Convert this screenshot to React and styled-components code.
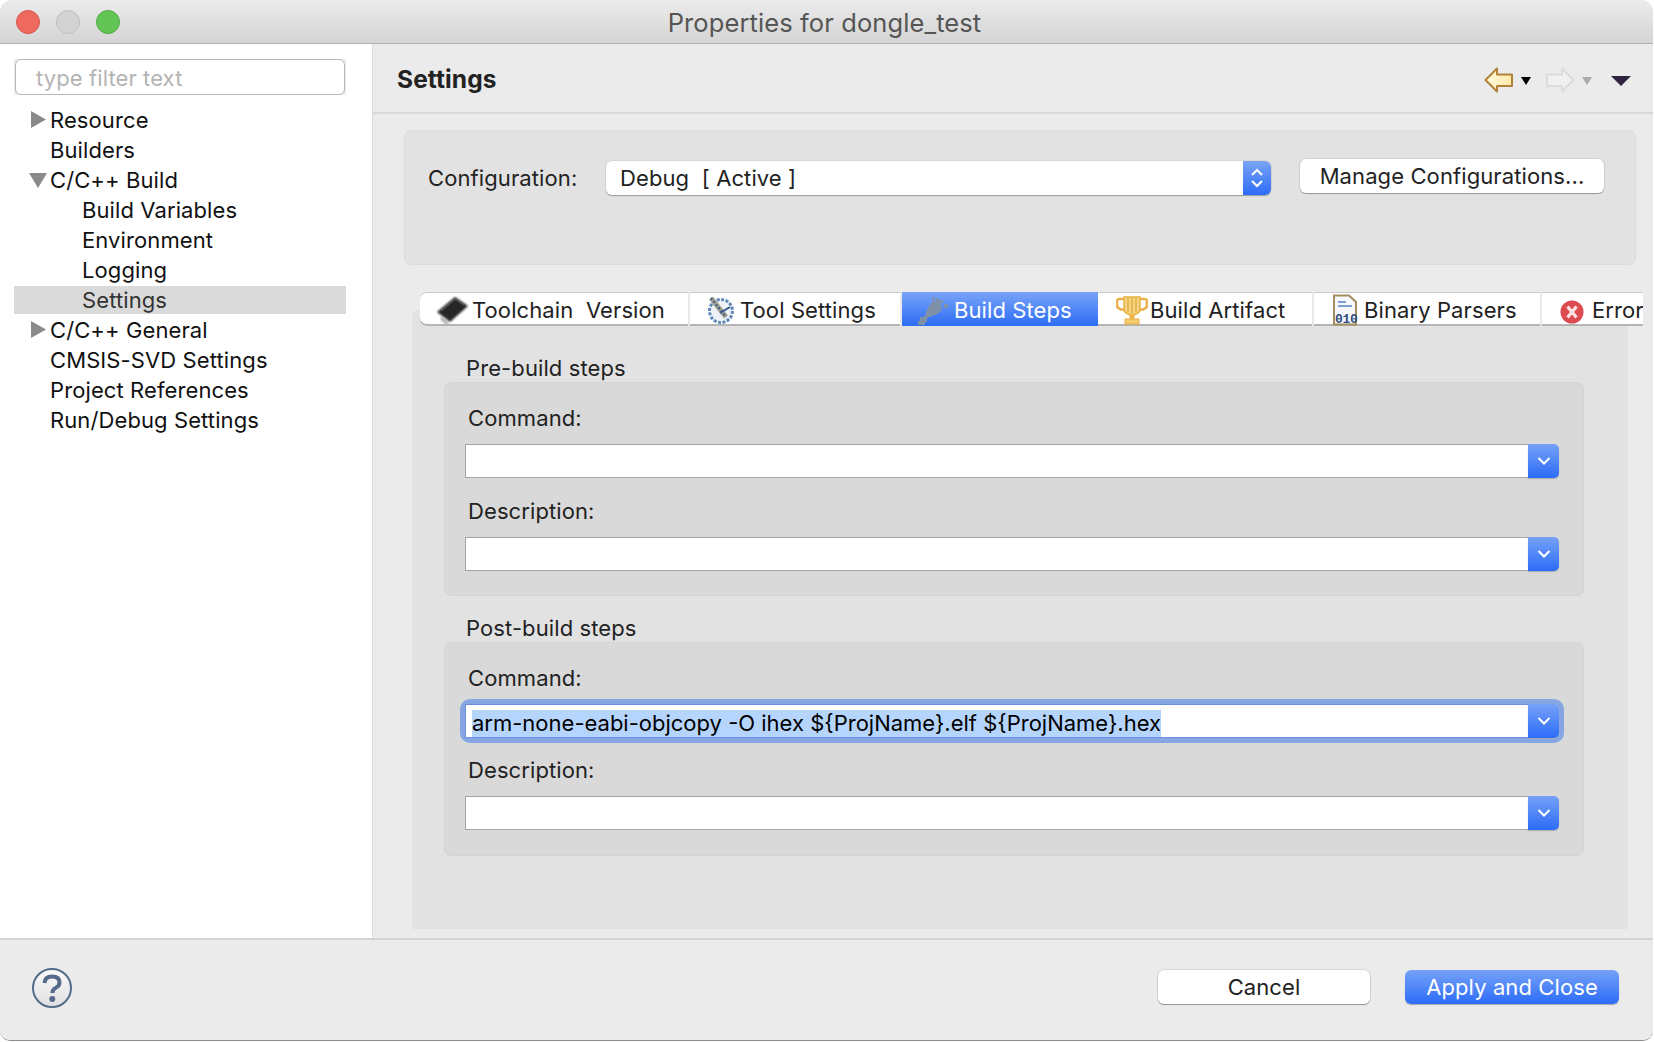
import React from "react";
import styled, { createGlobalStyle } from "styled-components";

const Global = createGlobalStyle`
  html, body { margin: 0; padding: 0; background: #fff; }
  * { box-sizing: border-box; }
  body { font-family: Inter, "Liberation Sans", sans-serif; color: #222; }
`;

const Win = styled.div`
  width: 1653px; height: 1041px; display: flex; flex-direction: column; overflow: hidden;
  border-radius: 12px 12px 10px 10px; border-bottom: 1px solid #8c8c8c; background: #ebebeb;
  font-size: 22px; letter-spacing: 0.1px;
`;
const TitleBar = styled.div`
  height: 44px; flex: none; position: relative; display: flex; align-items: center; padding-left: 16px; gap: 16px;
  background: linear-gradient(#ebebeb, #d4d4d4); border-bottom: 1px solid #b1b1b1;
`;
const Light = styled.span`
  width: 24px; height: 24px; border-radius: 50%; background: ${p => p.$c}; border: 1px solid ${p => p.$b};
`;
const Title = styled.div`
  position: absolute; left: 0; right: 0; top: 8px; text-align: center; font-size: 25.5px; color: #555; padding-right: 4px; line-height: 30px;
`;
const Middle = styled.div`flex: none; height: 894px; display: flex;`;
const Sidebar = styled.div`
  width: 373px; flex: none; background: #fff; border-right: 1px solid #dcdcdc; padding: 15px 0 0 14px;
`;
const FilterWrap = styled.div`
  width: 332px; height: 36px; background: #ececec; padding: 0 1px; margin-bottom: 10px;
`;
const Filter = styled.div`
  width: 330px; height: 36px; background: #fff; border: 1px solid #b5b5b5; border-radius: 6px;
  color: #b4b4b4; padding-left: 20px; line-height: 36px;
`;
const Row = styled.div`
  width: 332px; height: 30px; display: flex; align-items: center; padding-left: ${p => p.$sub ? 68 : 36}px;
  position: relative; border-top: 1px solid ${p => p.$sel ? "#fff" : "transparent"}; border-bottom: 1px solid ${p => p.$sel ? "#fff" : "transparent"};
  background: ${p => p.$sel ? "#dadada" : "transparent"}; background-clip: padding-box; color: ${p => p.$sel ? "#333" : "#111"}; white-space: nowrap;
`;
const TwistyBox = styled.svg`position: absolute; left: ${p => p.$l}px; top: ${p => p.$t}px;`;
const Main = styled.div`flex: 1; min-width: 0; display: flex; flex-direction: column;`;
const Header = styled.div`
  height: 70px; flex: none; border-bottom: 2px solid #d8d8d8; display: flex; align-items: center; padding: 2px 22px 0 24px;
`;
const HeaderTitle = styled.div`font-weight: 700; font-size: 24.5px; color: #222; flex: 1;`;
const Nav = styled.div`display: flex; align-items: center; padding-top: 2px;`;
const Gap = styled.span`width: ${p => p.$w}px;`;
const ConfigGroup = styled.div`
  margin: 16px 17px 0 31px; height: 135px; background: #e2e2e2; border: 1px solid #dcdcdc; border-radius: 7px;
  display: flex; align-items: flex-start; padding: 28px 30px 0 23px;
`;
const ConfigLabel = styled.div`width: 178px; line-height: 34px; padding-top: 2px;`;
const Select = styled.div`
  width: 665px; height: 34px; margin-top: 2px; display: flex; background: #fff; border-radius: 6px; overflow: hidden;
  box-shadow: 0 1px 1px #999, 0 0 0 .5px #ccc; padding-left: 14px; line-height: 34px; justify-content: space-between; white-space: pre;
`;
const Stepper = styled.div`
  width: 28px; background: linear-gradient(#7aa4f6, #2c6cf7); display: flex; align-items: center; justify-content: center;
`;
const Btn = styled.div`
  height: 34px; width: ${p => p.$w}px; margin-left: ${p => p.$ml || 0}px; border-radius: 6px; text-align: center; line-height: 34px;
  background: ${p => p.$primary ? "linear-gradient(#75a1f7, #2c6cf7)" : "#fff"};
  color: ${p => p.$primary ? "#fff" : "#222"};
  box-shadow: ${p => p.$primary ? "0 1px 1px #aaa" : "0 1px 1px #999, 0 0 0 .5px #c4c4c4"};
  flex: none;
`;
const Tabs = styled.div`
  margin: 27px 0 0 47px; height: 34px; width: 1223px; display: flex; position: relative; z-index: 1; overflow: hidden;
  background: #fff; border-radius: 7px 0 0 7px; box-shadow: inset 0 1px 0 #c9c9c9, inset 0 -2px 0 #b5b5b5;
`;
const Tab = styled.div`
  width: ${p => p.$w}px; flex: none; display: flex; align-items: center; white-space: pre; padding: 2px 0 0 ${p => p.$pl}px; gap: ${p => p.$gap}px;
  height: 34px; border-right: 2px solid ${p => p.$plain ? "#e8e8e8" : "transparent"};
  background: ${p => p.$active ? "linear-gradient(#79a4f7, #2c6cf7)" : "transparent"};
  color: ${p => p.$active ? "#fff" : "#222"};
  svg { flex: none; }
`;
const TabPanel = styled.div`
  margin: -16px 25px 0 39px; height: 619px; background: #e2e2e2; padding: 46px 44px 0 32px; border-radius: 7px 0 0 0;
`;
const GroupLabel = styled.div`padding-left: 22px; height: 24px; line-height: 24px; margin-bottom: 2px; margin-top: ${p => p.$mt || 0}px;`;
const GroupBox = styled.div`
  height: 214px; background: #d9d9d9; border: 1px solid #d4d4d4; border-radius: 7px; padding: 21px 24px 0 20px;
`;
const FieldLabel = styled.div`padding-left: 3px; height: 28px; line-height: 28px; margin-bottom: 12px; margin-top: ${p => p.$mt || 0}px;`;
const Combo = styled.div`
  height: 34px; display: flex; border-radius: 5px;
  box-shadow: ${p => p.$focus ? "0 0 0 5px #85a5e3" : "none"};
  position: relative;
`;
const ComboInput = styled.div`
  flex: 1; background: #fff; border-top: 1px solid ${p => p.$focus ? "#6c8edb" : "#a3a3a3"}; border-left: 1px solid ${p => p.$focus ? "#6c8edb" : "#a3a3a3"}; border-bottom: 1px solid ${p => p.$focus ? "#6c8edb" : "#a3a3a3"};
  padding: 5px 0 0 6px; line-height: 27px; color: #000;
`;
const Selected = styled.span`display: inline-block; height: 27px; background: #b6d5fd; letter-spacing: 0; white-space: pre;`;
const ComboBtn = styled.div`
  width: 31px; flex: none; background: linear-gradient(#75a1f7, #2c6cf7); border-radius: 0 5px 5px 0; display: flex; align-items: center; justify-content: center;
  box-shadow: 0 1px 1px #aaa;
`;
const Footer = styled.div`
  flex: 1; border-top: 2px solid #d3d3d3; display: flex; align-items: center; padding: 0 34px 7px 31px; background: #ebebeb;
`;
const Help = styled.svg`flex: none; margin-top: 2px;`;
const Spacer = styled.div`flex: 1;`;

const Right = () => <TwistyBox $l={16} $t={3} width="18" height="22" viewBox="0 0 18 22"><path d="M1 2 L16 10.5 L1 19Z" fill="#8a8a8a"/></TwistyBox>;
const Down = () => <TwistyBox $l={15} $t={5} width="20" height="18" viewBox="0 0 20 18"><path d="M0 2 H18 L9 17Z" fill="#8a8a8a"/></TwistyBox>;

const Chev = () => <svg width="16" height="10" viewBox="0 0 16 10"><path d="M2.5 2 L8 7.5 L13.5 2" fill="none" stroke="#fff" strokeWidth="2"/></svg>;

const ComboField = ({ focus, children }) => (
  <Combo $focus={focus}>
    <ComboInput $focus={focus}>{children}</ComboInput>
    <ComboBtn><Chev /></ComboBtn>
  </Combo>
);

const BackArrow = () => (
  <svg width="30" height="26" viewBox="0 0 30 26"><defs><linearGradient id="ba" x1="0" x2="1"><stop offset="0" stopColor="#fff8dc"/><stop offset="1" stopColor="#ffe9a8"/></linearGradient></defs>
    <path d="M1.5 13 L13 1.5 V7.5 H28 V19 H13 V24.5Z" fill="url(#ba)" stroke="#b2813a" strokeWidth="2" strokeLinejoin="round"/></svg>
);
const FwdArrow = () => (
  <svg width="30" height="26" viewBox="0 0 30 26"><path d="M28.5 13 L17 1.5 V7.5 H2 V19 H17 V24.5Z" fill="#f0f0f0" stroke="#dcdcdc" strokeWidth="2" strokeLinejoin="round"/></svg>
);
const Tri = ({ c, w = 10, h = 8, ml = 0 }) => (
  <svg width={w} height={h} viewBox={`0 0 ${w} ${h}`} style={{ marginLeft: ml, marginTop: 2 }}><path d={`M0 0H${w}L${w/2} ${h}Z`} fill={c}/></svg>
);

const ChipIcon = () => (
  <svg width="34" height="30" viewBox="0 0 34 30"><defs><filter id="cb"><feGaussianBlur stdDeviation="0.8"/></filter></defs>
    <path d="M2 17 L20 2 L33 11 L15 27Z" fill="#272727" filter="url(#cb)"/>
    <path d="M6 23 L13 29" stroke="#aaa" strokeWidth="3" filter="url(#cb)"/>
    <path d="M6 16 L20 4 L29 10" stroke="#5c5c5c" fill="none" strokeWidth="1.2"/></svg>
);
const ToolIcon = () => (
  <svg width="28" height="30" viewBox="0 0 28 30">
    <circle cx="14" cy="16" r="11.5" fill="#eef1f6" stroke="#5f88b8" strokeWidth="3" strokeDasharray="3 1.5"/>
    <path d="M4 3 L19 22" stroke="#a0a08c" strokeWidth="5"/>
    <path d="M4 3 L19 22" stroke="#34588f" strokeWidth="2" strokeDasharray="2 2"/>
    <path d="M13 18 L23 12" stroke="#34588f" strokeWidth="2"/></svg>
);
const FootIcon = () => (
  <svg width="30" height="30" viewBox="0 0 30 30" shapeRendering="crispEdges"><g fill="#7f91a8">
    <path d="M10 13 L14 6 H22 L24 14 L19 19 L9 23 L6 22Z"/>
    <rect x="2" y="22" width="7" height="5"/><rect x="0" y="26" width="7" height="6"/>
    <rect x="14" y="2" width="3" height="3"/><rect x="18" y="3" width="3" height="3"/><rect x="22" y="5" width="3" height="3"/><rect x="26" y="9" width="4" height="4"/></g></svg>
);
const TrophyIcon = () => (
  <svg width="32" height="30" viewBox="0 0 32 30"><g>
    <path d="M8 2 H24 V14 Q24 19 16 20 Q8 19 8 14Z" fill="#f4d47e" stroke="#e8ae42" strokeWidth="1.5"/>
    <path d="M8 4 H3 Q1 4 1 7 V10 Q1 14 8 15 M24 4 H29 Q31 4 31 7 V10 Q31 14 24 15" fill="none" stroke="#eab14a" strokeWidth="2.5"/>
    <path d="M12 3V17M16 3V18M20 3V17" stroke="#e3ad48" strokeWidth="1.5"/>
    <rect x="13.5" y="19" width="5" height="5" fill="#efb74c"/><rect x="9" y="24" width="14" height="5" fill="#f3cc6e" stroke="#e7ae44"/></g></svg>
);
const BinIcon = () => (
  <svg width="28" height="32" viewBox="0 0 28 32">
    <path d="M2 1.5 H17 L24 8 V30.5 H2Z" fill="#f6f7fb" stroke="#a38d5e" strokeWidth="2"/>
    <path d="M6 8H14M6 12H20" stroke="#7fa0ce" strokeWidth="2"/>
    <text x="3" y="29" fontFamily="Liberation Mono, monospace" fontWeight="700" fontSize="13" letterSpacing="-0.3" fill="#2f4d80" stroke="none">010</text></svg>
);
const ErrIcon = () => (
  <svg width="26" height="30" viewBox="0 0 26 30"><circle cx="13" cy="17" r="11.5" fill="#dd4a50"/><path d="M8.5 11.5 L17.5 22.5 M17.5 11.5 L8.5 22.5" stroke="#fbe0e0" strokeWidth="3.4"/></svg>
);

export default function App() {
  const tree = [
    { t: "Resource", a: "r" }, { t: "Builders" }, { t: "C/C++ Build", a: "d" },
    { t: "Build Variables", s: 1 }, { t: "Environment", s: 1 }, { t: "Logging", s: 1 }, { t: "Settings", s: 1, sel: 1 },
    { t: "C/C++ General", a: "r" }, { t: "CMSIS-SVD Settings" }, { t: "Project References" }, { t: "Run/Debug Settings" },
  ];
  return (
    <Win>
      <Global />
      <TitleBar>
        <Light $c="#ee6a5f" $b="#d9534a" />
        <Light $c="#d3d3d3" $b="#bdbdbd" />
        <Light $c="#62c454" $b="#4fa943" />
        <Title>Properties for dongle_test</Title>
      </TitleBar>
      <Middle>
        <Sidebar>
          <FilterWrap><Filter>type filter text</Filter></FilterWrap>
          {tree.map(n => (
            <Row key={n.t} $sub={n.s} $sel={n.sel}>
              {n.a === "r" && <Right />}
              {n.a === "d" && <Down />}
              {n.t}
            </Row>
          ))}
        </Sidebar>
        <Main>
          <Header>
            <HeaderTitle>Settings</HeaderTitle>
            <Nav>
              <BackArrow />
              <Tri c="#000" ml={7} />
              <Gap $w={14} />
              <FwdArrow />
              <Tri c="#aaa" ml={7} />
              <Gap $w={19} />
              <Tri c="#2f2440" w={20} h={10} />
            </Nav>
          </Header>
          <ConfigGroup>
            <ConfigLabel>Configuration:</ConfigLabel>
            <Select>
              <span>Debug  [ Active ]</span>
              <Stepper>
                <svg width="16" height="24" viewBox="0 0 16 24"><path d="M3 9 L8 4 L13 9 M3 15 L8 20 L13 15" fill="none" stroke="#fff" strokeWidth="2"/></svg>
              </Stepper>
            </Select>
            <Btn $w={304} $ml={29}>Manage Configurations...</Btn>
          </ConfigGroup>
          <Tabs>
            <Tab $w={270} $pl={15} $gap={3} $plain><ChipIcon />Toolchain  Version</Tab>
            <Tab $w={212} $pl={17} $gap={5} $plain><ToolIcon />Tool Settings</Tab>
            <Tab $w={196} $pl={16} $gap={6} $active><FootIcon />Build Steps</Tab>
            <Tab $w={216} $pl={18} $gap={2} $plain><TrophyIcon />Build Artifact</Tab>
            <Tab $w={228} $pl={18} $gap={4} $plain><BinIcon />Binary Parsers</Tab>
            <Tab $w={101} $pl={17} $gap={7}><ErrIcon />Error</Tab>
          </Tabs>
          <TabPanel>
            <GroupLabel>Pre-build steps</GroupLabel>
            <GroupBox>
              <FieldLabel>Command:</FieldLabel>
              <ComboField />
              <FieldLabel $mt={19}>Description:</FieldLabel>
              <ComboField />
            </GroupBox>
            <GroupLabel $mt={20}>Post-build steps</GroupLabel>
            <GroupBox>
              <FieldLabel>Command:</FieldLabel>
              <ComboField focus><Selected>arm-none-eabi-objcopy -O ihex ${"{"}ProjName{"}"}.elf ${"{"}ProjName{"}"}.hex</Selected></ComboField>
              <FieldLabel $mt={18}>Description:</FieldLabel>
              <ComboField />
            </GroupBox>
          </TabPanel>
        </Main>
      </Middle>
      <Footer>
        <Help width="42" height="42" viewBox="0 0 42 42">
          <defs><linearGradient id="hg" x1="0" y1="0" x2="0" y2="1"><stop offset="0" stopColor="#fafafa"/><stop offset="1" stopColor="#e0e0e0"/></linearGradient></defs>
          <circle cx="21" cy="21" r="19" fill="url(#hg)" stroke="#566a8c" strokeWidth="2"/>
          <path d="M13.5 16 Q14 9.5 21 9.5 Q28.5 9.5 28.5 15.5 Q28.5 19 24.5 21 Q21.5 22.5 21.5 26" fill="none" stroke="#566a8c" strokeWidth="4"/>
          <circle cx="21.3" cy="32" r="3" fill="#566a8c"/>
        </Help>
        <Spacer />
        <Btn $w={212}>Cancel</Btn>
        <Btn $w={214} $ml={35} $primary>Apply and Close</Btn>
      </Footer>
    </Win>
  );
}
